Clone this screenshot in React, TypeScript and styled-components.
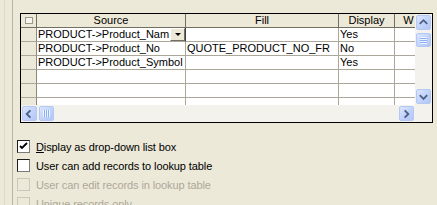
import React from "react";
import styled, { createGlobalStyle } from "styled-components";

const GlobalStyle = createGlobalStyle`
	html, body {
		margin: 0;
		padding: 0;
		background: #ece9d8;
	}
	body {
		font-family: "Liberation Sans", Arial, sans-serif;
		font-size: 11px;
		color: #000;
	}
`;

type Row = { source: string; fill: string; display: string };

const rows: Row[] = [
	{ source: "PRODUCT->Product_Nam", fill: "", display: "Yes" },
	{ source: "PRODUCT->Product_No", fill: "QUOTE_PRODUCT_NO_FR", display: "No" },
	{ source: "PRODUCT->Product_Symbol", fill: "", display: "Yes" },
	{ source: "", fill: "", display: "" },
	{ source: "", fill: "", display: "" },
	{ source: "", fill: "", display: "" },
];

const options = [
	{ label: "Display as drop-down list box", mnemonic: true, checked: true, disabled: false },
	{ label: "User can add records to lookup table", mnemonic: false, checked: false, disabled: false },
	{ label: "User can edit records in lookup table", mnemonic: false, checked: false, disabled: true },
	{ label: "Unique records only", mnemonic: false, checked: false, disabled: true },
];

const Arrow = ({ dir }: { dir: "up" | "down" | "left" | "right" }) => {
	const points = {
		up: "3,8 7,4 11,8",
		down: "3,5 7,9 11,5",
		left: "8,3 4,7 8,11",
		right: "5,3 9,7 5,11",
	}[dir];
	return (
		<svg width="14" height="14" viewBox="0 0 14 14">
			<polyline points={points} fill="none" stroke="#4d6185" strokeWidth="2" />
		</svg>
	);
};

const App = (): JSX.Element => {
	return (
		<>
			<GlobalStyle />
			<Screen>
				<OuterRail>
					<Panel>
						<GridArea>
							<Grid>
								<Viewport>
									<Cells>
										<HeaderCell>
											<CornerBox />
										</HeaderCell>
										<HeaderCell>Source</HeaderCell>
										<HeaderCell>Fill</HeaderCell>
										<HeaderCell>Display</HeaderCell>
										<HeaderCell>W</HeaderCell>
										{rows.map((r, i) => (
											<React.Fragment key={i}>
												<RowHeader />
												{i === 0 ? (
													<EditorCell>
														<EditorText>{r.source}</EditorText>
														<DropButton>
															<DropArrow />
														</DropButton>
													</EditorCell>
												) : (
													<BodyCell>{r.source}</BodyCell>
												)}
												<BodyCell>{r.fill}</BodyCell>
												<BodyCell>{r.display}</BodyCell>
												<BodyCell />
											</React.Fragment>
										))}
									</Cells>
								</Viewport>
								<VScroll>
									<ScrollButton>
										<Arrow dir="up" />
									</ScrollButton>
									<VThumb>
										<Grip $vertical />
									</VThumb>
									<Spacer />
									<ScrollButton>
										<Arrow dir="down" />
									</ScrollButton>
								</VScroll>
								<HScroll>
									<ScrollButton>
										<Arrow dir="left" />
									</ScrollButton>
									<HThumb>
										<Grip />
									</HThumb>
									<Spacer />
									<ScrollButton>
										<Arrow dir="right" />
									</ScrollButton>
								</HScroll>
								<ScrollCorner />
							</Grid>
						</GridArea>
						<Separator />
						<Options>
							{options.map((o) => (
								<OptionRow key={o.label}>
									<CheckBox $disabled={o.disabled}>
										{o.checked && (
											<svg width="9" height="9" viewBox="0 0 9 9">
												<polyline points="1,4 3,6 8,1" fill="none" stroke="#000" strokeWidth="1.8" />
											</svg>
										)}
									</CheckBox>
									<OptionLabel $disabled={o.disabled}>
										{o.mnemonic ? (
											<>
												<u>{o.label[0]}</u>
												{o.label.slice(1)}
											</>
										) : (
											o.label
										)}
									</OptionLabel>
								</OptionRow>
							))}
						</Options>
					</Panel>
				</OuterRail>
			</Screen>
		</>
	);
};

const Screen = styled.div`
	width: 437px;
	height: 205px;
	overflow: hidden;
	display: flex;
	background: #ece9d8;
`;

const OuterRail = styled.div`
	flex: 1;
	display: flex;
	margin-left: 4px;
	padding-left: 7px;
	border-left: 1px solid #dedbca;
`;

const Panel = styled.div`
	flex: 1;
	min-width: 0;
	display: flex;
	flex-direction: column;
	border-left: 1px solid #b9b6a6;
`;

const GridArea = styled.div`
	padding: 13px 4px 0 7px;
`;

const Grid = styled.div`
	box-sizing: border-box;
	height: 110px;
	border: 1px solid #000;
	background: #fff;
	display: grid;
	grid-template-columns: 1fr 17px;
	grid-template-rows: 1fr 17px;
	overflow: hidden;
`;

const Viewport = styled.div`
	overflow: hidden;
	min-width: 0;
	min-height: 0;
`;

const Cells = styled.div`
	display: grid;
	grid-template-columns: 16px 149px 153px 56px 28px;
	grid-auto-rows: 14px;
	width: max-content;
`;

const HeaderCell = styled.div`
	box-sizing: border-box;
	background: #ece9d8;
	border-right: 1px solid #716f64;
	border-bottom: 1px solid #716f64;
	text-align: center;
	line-height: 13px;
	white-space: nowrap;
	overflow: hidden;
	position: relative;
`;

const CornerBox = styled.div`
	position: absolute;
	left: 4px;
	top: 3px;
	width: 6px;
	height: 5px;
	border: 1px solid #9d9a89;
	background: #f7f6f0;
`;

const RowHeader = styled.div`
	box-sizing: border-box;
	background: #ece9d8;
	border-right: 1px solid #8c8a7e;
	border-bottom: 1px solid #aca899;
`;

const BodyCell = styled.div`
	box-sizing: border-box;
	border-right: 1px solid #aca899;
	border-bottom: 1px solid #aca899;
	padding-left: 1px;
	line-height: 13px;
	white-space: nowrap;
	overflow: hidden;
`;

const EditorCell = styled(BodyCell)`
	display: flex;
	align-items: stretch;
	border-right-color: #404040;
`;

const EditorText = styled.span`
	flex: 1;
	overflow: hidden;
`;

const DropButton = styled.div`
	box-sizing: border-box;
	width: 15px;
	height: 13px;
	background: #ece9d8;
	border: 1px solid;
	border-color: #fff #716f64 #716f64 #fff;
	display: flex;
	align-items: center;
	justify-content: center;
`;

const DropArrow = styled.div`
	width: 0;
	height: 0;
	border-left: 3px solid transparent;
	border-right: 3px solid transparent;
	border-top: 3px solid #000;
`;

const ScrollTrack = styled.div`
	background: #f4f2ec;
	display: flex;
	padding: 1px;
	box-sizing: border-box;
`;

const VScroll = styled(ScrollTrack)`
	flex-direction: column;
`;

const HScroll = styled(ScrollTrack)`
	flex-direction: row;
`;

const ScrollCorner = styled.div`
	background: #f4f2ec;
`;

const ScrollButton = styled.div`
	box-sizing: border-box;
	width: 15px;
	height: 15px;
	flex: none;
	border: 1px solid #b4c8f6;
	border-radius: 2px;
	background: linear-gradient(135deg, #dbe5fd 0%, #c3d4fc 50%, #b2c7f6 100%);
	display: flex;
	align-items: center;
	justify-content: center;
`;

const Thumb = styled(ScrollButton)`
	display: flex;
	align-items: center;
	justify-content: center;
`;

const VThumb = styled(Thumb)`
	margin-top: 3px;
	height: 14px;
`;

const HThumb = styled(Thumb)`
	margin-left: 2px;
	width: 15px;
`;

const Grip = styled.div<{ $vertical?: boolean }>`
	width: ${(p) => (p.$vertical ? "7px" : "7px")};
	height: 7px;
	background: ${(p) =>
		p.$vertical
			? "repeating-linear-gradient(180deg, #eef4fe 0 1px, #8cb0f8 1px 2px)"
			: "repeating-linear-gradient(90deg, #eef4fe 0 1px, #8cb0f8 1px 2px)"};
`;

const Spacer = styled.div`
	flex: 1;
`;

const Separator = styled.div`
	margin-top: 11px;
	height: 1px;
	background: #a9a795;
`;

const Options = styled.div`
	padding: 6px 0 0 4px;
	display: flex;
	flex-direction: column;
	gap: 6px;
`;

const OptionRow = styled.div`
	display: flex;
	align-items: center;
	height: 13px;
`;

const CheckBox = styled.div<{ $disabled?: boolean }>`
	box-sizing: border-box;
	width: 13px;
	height: 13px;
	flex: none;
	border: 1px solid;
	border-color: ${(p) => (p.$disabled ? "#cac8bb" : "#1c1c1c #7a7a7a #7a7a7a #1c1c1c")};
	background: ${(p) => (p.$disabled ? "#ece9d8" : "#fff")};
	display: flex;
	align-items: center;
	justify-content: center;
`;

const OptionLabel = styled.span<{ $disabled?: boolean }>`
	margin-left: 6px;
	white-space: nowrap;
	letter-spacing: -0.1px;
	color: ${(p) => (p.$disabled ? "#aca899" : "#000")};
`;

export default App;
